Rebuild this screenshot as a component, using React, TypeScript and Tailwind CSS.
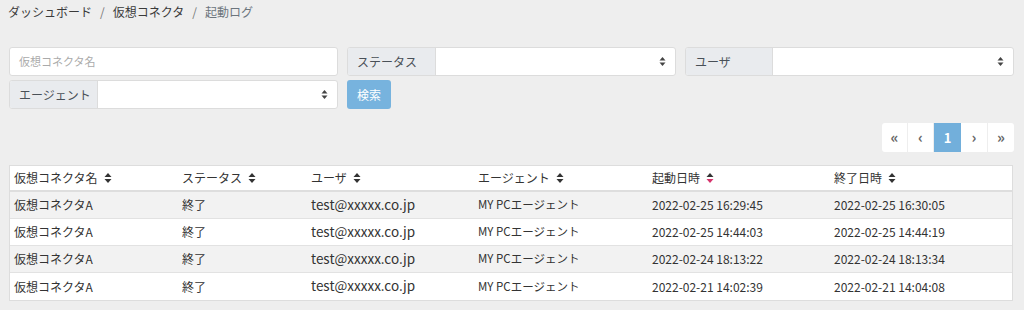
const font = { fontFamily: '"Noto Sans CJK JP", "Noto Sans", sans-serif' };

const SortIcon = ({ active }: { active?: boolean }) => (
  <svg width="8" height="12" viewBox="0 0 8 12" className="ml-[6px] inline-block">
    <path d="M0.5 5 L4 1 L7.5 5 Z" fill="#333" />
    <path d="M0.5 7 L4 11 L7.5 7 Z" fill={active ? "#d6336c" : "#333"} />
  </svg>
);

const SelectArrows = () => (
  <svg width="7" height="11" viewBox="0 0 7 11">
    <path d="M0.5 4.5 L3.5 1 L6.5 4.5 Z" fill="#444" />
    <path d="M0.5 6.5 L3.5 10 L6.5 6.5 Z" fill="#444" />
  </svg>
);

const SelectGroup = ({ label, labelW }: { label: string; labelW: string }) => (
  <div className="flex h-[29px] rounded-[3px] border border-[#dcdcdc] bg-white overflow-hidden">
    <div className={`${labelW} shrink-0 whitespace-nowrap flex items-center px-[9px] bg-[#e9ebee] border-r border-[#dcdcdc] text-[12px] text-[#495057]`}>
      {label}
    </div>
    <div className="flex-1 flex items-center justify-end pr-[9px]">
      <SelectArrows />
    </div>
  </div>
);

const rows = [
  ["2022-02-25 16:29:45", "2022-02-25 16:30:05"],
  ["2022-02-25 14:44:03", "2022-02-25 14:44:19"],
  ["2022-02-24 18:13:22", "2022-02-24 18:13:34"],
  ["2022-02-21 14:02:39", "2022-02-21 14:04:08"],
];

const cols = ["w-[168px]", "w-[129px]", "w-[167px]", "w-[174px]", "w-[182px]", "flex-1"];

export default function App() {
  return (
    <div className="w-[1024px] h-[310px] bg-[#eeeeee] pl-[9px] pr-[10px] text-[#333]" style={font}>
      {/* breadcrumb */}
      <div className="h-[26px] pb-[2px] text-[12px] flex items-center gap-[8px] -ml-[1px] text-[#3a3a3a]">
        <span>ダッシュボード</span>
        <span className="text-[#777]">/</span>
        <span>仮想コネクタ</span>
        <span className="text-[#777]">/</span>
        <span className="text-[#6c757d]">起動ログ</span>
      </div>

      {/* filters */}
      <div className="mt-[21px] grid grid-cols-3 gap-x-[9px] gap-y-[4px]">
        <div className="h-[29px] rounded-[3px] border border-[#dcdcdc] bg-white flex items-center px-[9px] text-[11px] text-[#aaa]">
          仮想コネクタ名
        </div>
        <SelectGroup label="ステータス" labelW="w-[88px]" />
        <SelectGroup label="ユーザ" labelW="w-[87px]" />
        <SelectGroup label="エージェント" labelW="w-[88px]" />
        <div>
          <button className="h-[29px] px-[10px] rounded-[3px] bg-[#77b3de] text-white text-[12px]">検索</button>
        </div>
      </div>

      {/* pagination */}
      <div className="mt-[14px] flex justify-end">
        <div className="flex h-[29px] text-[15px] font-bold rounded-[3px] overflow-hidden bg-white">
          <div className="w-[26px] flex items-center justify-center text-[#666] border-r border-[#eee]">«</div>
          <div className="w-[26px] flex items-center justify-center text-[#666] border-r border-[#eee]">‹</div>
          <div className="w-[27px] flex items-center justify-center bg-[#72afdb] text-white text-[13px]">1</div>
          <div className="w-[27px] flex items-center justify-center text-[#666] border-r border-[#eee]">›</div>
          <div className="w-[26px] flex items-center justify-center text-[#666]">»</div>
        </div>
      </div>

      {/* table */}
      <div className="mt-[13px] w-[1004px] border border-[#dddddd] bg-white text-[12px]">
        <div className="flex h-[26px] items-center px-[4px] border-b-2 border-[#dedede]">
          <div className={`${cols[0]} flex items-center`}>仮想コネクタ名<SortIcon /></div>
          <div className={`${cols[1]} flex items-center`}>ステータス<SortIcon /></div>
          <div className={`${cols[2]} flex items-center`}>ユーザ<SortIcon /></div>
          <div className={`${cols[3]} flex items-center`}>エージェント<SortIcon /></div>
          <div className={`${cols[4]} flex items-center`}>起動日時<SortIcon active /></div>
          <div className={`${cols[5]} flex items-center`}>終了日時<SortIcon /></div>
        </div>
        {rows.map((r, i) => (
          <div
            key={i}
            className={`flex h-[27px] items-center px-[4px] ${i < 3 ? "border-b border-[#e2e2e2]" : ""} ${i % 2 === 0 ? "bg-[#f2f2f2]" : "bg-white"}`}
          >
            <div className={cols[0]}>仮想コネクタA</div>
            <div className={cols[1]}>終了</div>
            <div className={`${cols[2]} text-[13.5px] -mt-[2px]`}>test@xxxxx.co.jp</div>
            <div className={`${cols[3]} text-[11.5px]`}>MY PCエージェント</div>
            <div className={cols[4]}>{r[0]}</div>
            <div className={cols[5]}>{r[1]}</div>
          </div>
        ))}
      </div>
    </div>
  );
}
